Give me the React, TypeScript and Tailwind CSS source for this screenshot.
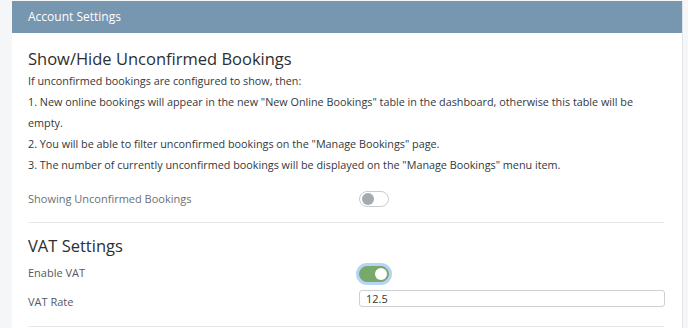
import { useState } from "react";

function Toggle({ checked, focused, onChange }: { checked: boolean; focused?: boolean; onChange: (v: boolean) => void }) {
  return (
    <button
      type="button"
      onClick={() => onChange(!checked)}
      className={`relative flex h-[16px] w-[30px] items-center rounded-full border ${
        checked ? "border-[#78a96a] bg-[#78a96a]" : "border-[#c9ccd1] bg-white"
      } ${focused ? "ring-[3px] ring-[#b6d4f5]" : ""}`}
    >
      <span
        className={`absolute top-[1px] h-[12px] w-[12px] rounded-full ${
          checked ? "left-[15px] bg-white" : "left-[2px] bg-[#a5a9b0]"
        }`}
      />
    </button>
  );
}

export default function App() {
  const [showUnconfirmed, setShowUnconfirmed] = useState(false);
  const [enableVat, setEnableVat] = useState(true);
  const [vatRate, setVatRate] = useState("12.5");

  return (
    <div
      className="flex h-[328px] w-[688px] overflow-hidden bg-[#f5f6f8] pt-[1px] pl-[12px]"
      style={{ fontFamily: "'Open Sans', 'Liberation Sans', sans-serif" }}
    >
      <div className="w-[671px] border-r border-[#e2e4e8] bg-white">
        <div className="flex h-[32px] items-center bg-[#7796b0] px-4 text-[12px] text-white">
          Account Settings
        </div>

        <div className="px-4">
          <div className="pt-[15px] text-[16.5px] leading-[22px] text-[#2b2f33]">
            Show/Hide Unconfirmed Bookings
          </div>
          <div className="text-[10.8px] leading-[21px] text-[#33373b]">
            <p>If unconfirmed bookings are configured to show, then:</p>
            <p>
              1. New online bookings will appear in the new "New Online Bookings" table in the dashboard, otherwise this table will be empty.
            </p>
            <p>2. You will be able to filter unconfirmed bookings on the "Manage Bookings" page.</p>
            <p>3. The number of currently unconfirmed bookings will be displayed on the "Manage Bookings" menu item.</p>
          </div>

          <div className="mt-[16px] flex items-center pb-[14px]">
            <div className="w-[331px] text-[11px] text-[#6b7075]">Showing Unconfirmed Bookings</div>
            <Toggle checked={showUnconfirmed} onChange={setShowUnconfirmed} />
          </div>

          <div className="mr-[2px] border-t border-[#e6e8eb]" />

          <div className="pt-[12px] text-[16.5px] leading-[22px] text-[#2b2f33]">VAT Settings</div>

          <div className="mt-[7px] flex h-[20px] items-center">
            <div className="w-[331px] text-[11px] text-[#55595e]">Enable VAT</div>
            <Toggle checked={enableVat} focused onChange={setEnableVat} />
          </div>

          <div className="mt-[6px] flex items-start">
            <div className="w-[331px] pt-[4px] text-[11px] text-[#55595e]">VAT Rate</div>
            <input
              value={vatRate}
              onChange={e => setVatRate(e.target.value)}
              className="h-[17px] w-[306px] rounded-[3px] border border-[#cdd0d4] px-[6px] text-[11px] text-[#33373b] outline-none"
            />
          </div>

          <div className="mt-[16px] mr-[2px] border-t border-[#e6e8eb]" />
        </div>
      </div>
    </div>
  );
}
